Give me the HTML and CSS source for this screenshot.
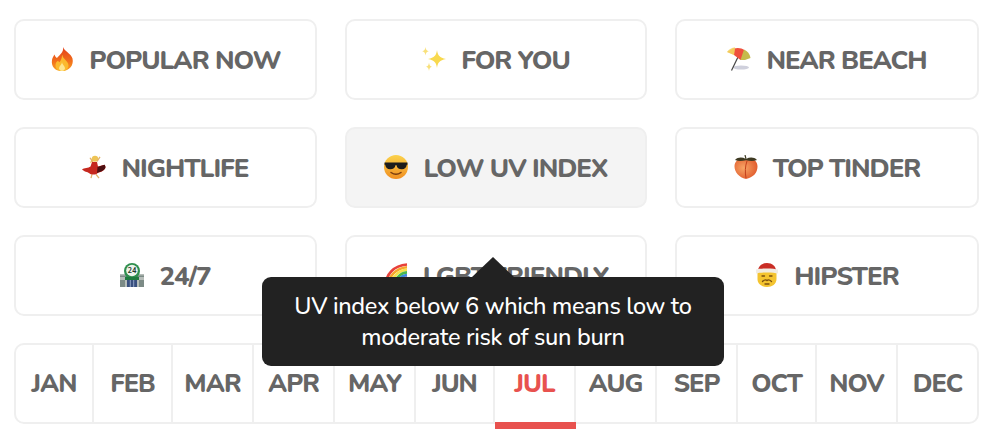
FILE: index.html
```html
<!DOCTYPE html>
<html lang="en">
<head>
<meta charset="utf-8">
<title>Filters</title>
<link rel="stylesheet" href="styles.css">
</head>
<body>
<main class="page">
  <section class="filters">
    <div class="card">
      <svg class="emoji" viewBox="0 0 24 26" preserveAspectRatio="none"><defs><linearGradient id="f1" x1="0" y1="0" x2="0" y2="1"><stop offset="0" stop-color="#e33f1a"/><stop offset=".6" stop-color="#f2701c"/><stop offset="1" stop-color="#f9a11f"/></linearGradient></defs><path fill="url(#f1)" d="M13 0c1 4 8 7 9.500 12.500C24 20 19.500 26 12 26S1 20.500 2 14c.5-3 1.500-4 2.500-6 .5 2 1.500 3 2.500 4 2-3 7-6 6-12z"/><path fill="#fbb92e" d="M12.500 9c0 4 6 6 6 11 0 3.500-3 6-6.500 6s-6.500-2.500-6.500-6c0-2.500 1-4 2.500-5 .5 1 1 1.500 1.500 1.500 1.500-2 2.500-4.500 2.500-7.500z"/><path fill="#fee58f" d="M12 16.500c0 2.500 3 4 3 6.500 0 1.500-1.500 3-3 3s-3-1.500-3-3c0-2.500 3-4 3-6.500z"/></svg>
      <span class="label">POPULAR NOW</span>
    </div>
    <div class="card">
      <svg class="emoji" viewBox="0 0 24 24"><path fill="#f8d94e" d="M15 3c.8 5.500 2.500 7.800 9 9-6.500 1.200-8.200 3.500-9 9-.8-5.500-2.500-7.800-9-9 6.500-1.200 8.200-3.500 9-9z"/><path fill="#f8e07a" d="M3.500 0c.4 2.800 1.200 3.800 3.300 4.200C4.700 4.600 3.900 5.600 3.500 8.400 3.100 5.600 2.300 4.600.2 4.200 2.300 3.800 3.100 2.800 3.500 0zM7 15.500c.4 2.800 1.100 3.800 3 4.300-1.900.5-2.600 1.500-3 4.200-.4-2.700-1.100-3.700-3-4.200 1.900-.5 2.600-1.500 3-4.300z"/></svg>
      <span class="label">FOR YOU</span>
    </div>
    <div class="card">
      <svg class="emoji" viewBox="0 0 24 24"><ellipse cx="14" cy="20.500" rx="8" ry="2" fill="#cfd0dc"/><path stroke="#444" stroke-width="1.200" d="M4.500 23.500L11.500 9"/><path fill="#ef4f3c" d="M7 1.500c6-2 13 1 15 8l-8.500 3.500-6.500-5z"/><path fill="#f5d774" d="M0 5c2-3 5-4.500 8-4.500L7 8z"/><path fill="#f1c24b" d="M0 5l7 3 1-7.500z" opacity=".6"/><path fill="#c5bb4a" d="M17 2.500c3.500 1.500 6 4.500 6.500 8.500l-5.500 2-4.500 0z"/></svg>
      <span class="label">NEAR BEACH</span>
    </div>
    <div class="card">
      <svg class="emoji" viewBox="0 0 24 26" preserveAspectRatio="none"><circle cx="13" cy="4" r="3.200" fill="#eec455"/><path fill="#eec455" d="M10 3L8 9l4-3z"/><path stroke="#e2b36b" stroke-width="1.300" fill="none" d="M11 8L8 3M15 7l3-5M10 21l-1 4M14 21l3 4"/><path fill="#c6281f" d="M10 7.500h5l1 5 6.500-2c1.800 2 1.200 5-1.500 6.500-2 2-4.500 1-6.500 3.500-3 1.500-6 .5-7.500-1-1.500-1-4.500-1-7-4 2-1.500 6.500-1.300 8.500-3z"/><path fill="#4d1012" d="M15.500 13l7-2.500c1.800 2.500.8 5-2 6.500-2 1.500-4 1.500-5.500 2.500z"/></svg>
      <span class="label">NIGHTLIFE</span>
    </div>
    <div class="card card-active">
      <svg class="emoji" viewBox="0 0 24 24"><defs><linearGradient id="s1" x1="0" y1="0" x2="0" y2="1"><stop offset="0" stop-color="#fbd24b"/><stop offset="1" stop-color="#f08f22"/></linearGradient></defs><circle cx="12" cy="12" r="12" fill="url(#s1)"/><path fill="#1c1c1c" d="M.5 7.500h23v2.300h-.7c-.3 2.700-2 4.500-5 4.500-3 0-5-1.600-5.200-4h-1.200c-.2 2.400-2.200 4-5.200 4s-4.700-1.800-5-4.500H.5z"/><path fill="none" stroke="#7a3d10" stroke-width="1.500" stroke-linecap="round" d="M7 17.500c3 2.200 7 2.200 10 0"/></svg>
      <span class="label">LOW UV INDEX</span>
    </div>
    <div class="card">
      <svg class="emoji" viewBox="0 0 24 24"><defs><radialGradient id="p1" cx=".4" cy=".45" r=".7"><stop offset="0" stop-color="#f7a565"/><stop offset="1" stop-color="#de5226"/></radialGradient></defs><path fill="url(#p1)" d="M12 24C5 22.500.5 17 .5 11.500.5 5 7 2 12 5c5-3 11.500 0 11.500 6.500S19 22.500 12 24z"/><path fill="none" stroke="#c2401c" stroke-width="1" d="M13 6c-2 5-2 12-1 17"/><path fill="#3e3a22" d="M1 5c3-3 7-3 11-1 4-2 8-2 11 1-4 1.500-7 1.200-11 .2C8 6.200 5 6.500 1 5z"/><path stroke="#3e3a22" stroke-width="1.200" d="M12 4L11 0"/></svg>
      <span class="label">TOP TINDER</span>
    </div>
    <div class="card">
      <svg class="emoji" viewBox="0 0 24 24"><path fill="#b6bdb9" d="M0 11h24v13H0z"/><path fill="#7c8b86" d="M0 12.500h24V14H0zM0 17h5v7H0zM19 17h5v7h-5z"/><circle cx="12" cy="8" r="8" fill="#2f8f4e"/><circle cx="12" cy="7.500" r="5.800" fill="#eef3ec"/><text class="emoji-num" x="12" y="10">24</text><path fill="#1f7a3e" d="M5 14h14v3H5z"/><path fill="#39507f" d="M7 17h10v7H7z"/><path stroke="#8fa0c4" d="M10.300 17v7M13.700 17v7"/></svg>
      <span class="label">24/7</span>
    </div>
    <div class="card">
      <svg class="emoji" viewBox="0 0 24 24" fill="none" stroke-width="2.600"><path stroke="#e8413a" d="M1.500 24C1.500 11 10 2.500 23 1.500"/><path stroke="#f7a72c" d="M4.200 24C4.200 13 12 5 23 4.200"/><path stroke="#f6e14a" d="M6.800 24C6.800 15 14 7.500 23 6.800"/><path stroke="#4cb84c" d="M9.400 24C9.400 17 16 10 23 9.400"/><path stroke="#3d8bdc" d="M12 24C12 18 17 12.600 23 12"/><path stroke="#7a4bc0" d="M14.600 24c0-5 4-9 8.400-9.400"/></svg>
      <span class="label">LGBT FRIENDLY</span>
    </div>
    <div class="card">
      <svg class="emoji" viewBox="-1 0 24 24"><path fill="#f4c430" d="M1.500 9h19v7c0 5-4.500 8-9.500 8s-9.500-3-9.500-8z"/><path fill="#c92d25" d="M2 8C2 3 6 0 11 0s9 3 9 8z"/><path fill="#f1ece2" d="M0 6.500C4 5 18 5 22 6.500v4C18 9 4 9 0 10.500z"/><path fill="none" stroke="#7a4f10" stroke-width="1.300" stroke-linecap="round" d="M6 13h2.500M13.500 13H16M6.500 18.500c2-2 3.500-2 4.500-1 1-1 2.500-1 4.500 1M9 21h4"/></svg>
      <span class="label">HIPSTER</span>
    </div>
  </section>
  <nav class="months">
    <div class="month">JAN</div>
    <div class="month">FEB</div>
    <div class="month">MAR</div>
    <div class="month">APR</div>
    <div class="month">MAY</div>
    <div class="month">JUN</div>
    <div class="month month-active">JUL</div>
    <div class="month">AUG</div>
    <div class="month">SEP</div>
    <div class="month">OCT</div>
    <div class="month">NOV</div>
    <div class="month">DEC</div>
  </nav>
  <div class="tooltip">UV index below 6 which means low to moderate risk of sun burn</div>
</main>
</body>
</html>
```

FILE: styles.css
```css
* { box-sizing: border-box; }
html, body { margin: 0; background: #fff; }
body { width: 1000px; height: 443px; overflow: hidden; font-family: "Nunito", "Lato", "Noto Sans", sans-serif; color: #666; }
.page { position: relative; padding: 19px 21px 0 14px; display: flex; flex-direction: column; gap: 27px; }
.filters { display: grid; grid-template-columns: 303px 302px 1fr; grid-auto-rows: 81px; column-gap: 28px; row-gap: 27px; }
.card { display: flex; align-items: center; justify-content: center; gap: 15px; border: 2px solid #efefef; border-radius: 10px; background: #fff; }
.card-active { background: #f4f4f4; }
.emoji { width: 24px; height: 24px; flex: none; margin-top: -2px; }
.emoji-num { font-size: 7.500px; font-weight: 700; fill: #1d3a2a; text-anchor: middle; }
.label { font-size: 26px; font-weight: 800; letter-spacing: -1.05px; line-height: 1; padding-top: 2px; }
.months { display: grid; grid-template-columns: 78px 79px 81px 81px 81px 79px 81px 81px 81px 79px 81px 1fr; height: 81px; border: 2px solid #efefef; border-radius: 10px; }
.month { position: relative; display: flex; align-items: center; justify-content: center; font-size: 25.500px; font-weight: 800; letter-spacing: -1px; border-right: 2px solid #efefef; }
.month:last-child { border-right: 0; }
.month-active { color: #e8524f; }
.month-active::after { content: ""; position: absolute; left: 0; right: -2px; bottom: -7px; height: 7px; background: #e8524f; }
.tooltip { position: absolute; left: 262px; top: 277px; width: 462px; height: 89px; padding: 14px 20px; background: #222; color: #fff; border-radius: 9px; font-size: 23.500px; letter-spacing: -0.33px; line-height: 31px; font-weight: 500; text-align: center; }
.tooltip::before { content: ""; position: absolute; left: 210px; top: -20px; border-left: 21px solid transparent; border-right: 21px solid transparent; border-bottom: 20px solid #222; }
```
